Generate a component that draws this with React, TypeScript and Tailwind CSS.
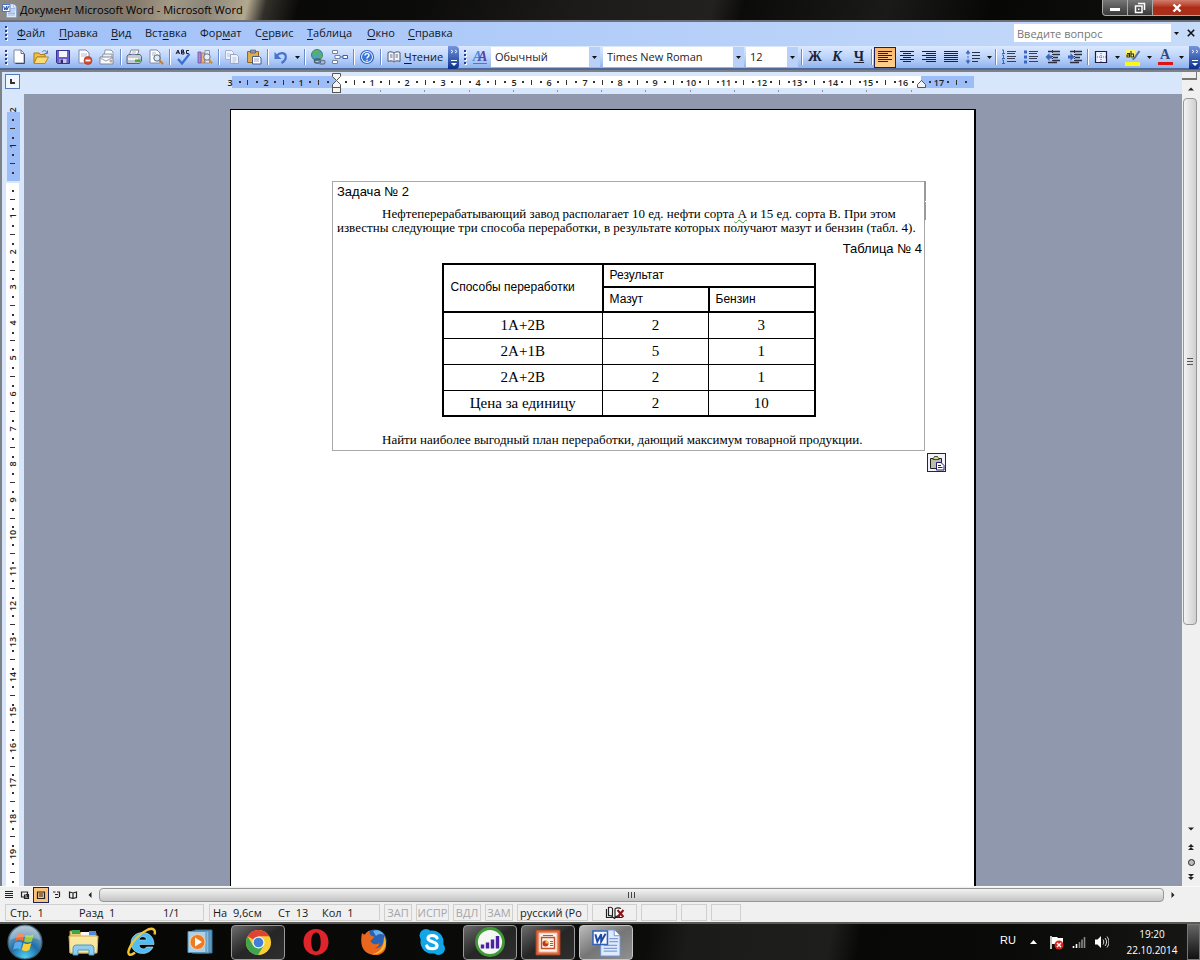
import React from 'react';

const UI = "font-['Open_Sans','Noto_Sans',sans-serif]";

/* ---------- small shared parts ---------- */

const Icon: React.FC<{ children: React.ReactNode; className?: string; box?: string }> = ({
  children,
  className = 'size-4',
  box = '0 0 16 16',
}) => (
  <svg viewBox={box} className={`${className} shrink-0`} fill="none" aria-hidden="true">
    {children}
  </svg>
);

const Sep = ({ narrow = false }: { narrow?: boolean }) => (
  <span className={`${narrow ? 'w-1' : 'w-[5px]'} flex h-4 shrink-0 justify-center`}>
    <span className="w-px bg-[#6a8ccb]" />
    <span className="w-px bg-white" />
  </span>
);

const Grip = () => (
  <svg viewBox="0 0 4 16" className="h-4 w-1 shrink-0" aria-hidden="true">
    {[1, 5, 9, 13].map((y) => (
      <g key={y}>
        <rect x="2" y={y + 1} width="2" height="2" fill="#fff" />
        <rect x="1" y={y} width="2" height="2" fill="#27418f" />
      </g>
    ))}
  </svg>
);

const Tool: React.FC<{ label: string; active?: boolean; children: React.ReactNode }> = ({ label, active, children }) => (
  <button
    type="button"
    aria-label={label}
    className={`flex h-[21px] w-[22px] shrink-0 items-center justify-center ${
      active ? 'border border-[#1c1f5e] bg-gradient-to-b from-[#fbb56b] to-[#fdd08f]' : ''
    }`}
  >
    {children}
  </button>
);

const Caret = ({ label }: { label: string }) => (
  <button type="button" aria-label={label} className="flex h-5 w-2.5 shrink-0 items-center justify-center">
    <Icon className="h-[3px] w-[5px]" box="0 0 5 3">
      <path d="M0 0h5L2.5 3z" fill="#111" />
    </Icon>
  </button>
);

const Overflow = () => (
  <button
    type="button"
    aria-label="Параметры панелей инструментов"
    className="flex h-[23px] w-[11px] shrink-0 items-end justify-center rounded-r-sm bg-gradient-to-b from-[#7596dc] to-[#0c2f8f] pb-0.5"
  >
    <Icon className="h-[18px] w-2" box="0 0 8 18">
      <path d="M1 1l2 1.500-2 1.500M5 1l2 1.500-2 1.500" stroke="#e8f0ff" />
      <path d="M1 11.500h6" stroke="#fff" />
      <path d="M1 14h6l-3 3z" fill="#fff" />
    </Icon>
  </button>
);

const Combo: React.FC<{ label: string; value: string; className: string }> = ({ label, value, className }) => (
  <span className={`relative flex h-5 shrink-0 ${className}`}>
    <select
      aria-label={label}
      defaultValue={value}
      className="h-5 w-full appearance-none border-r-[11px] border-[#b9d1f8] bg-white pl-1 text-[11px] leading-5 text-[#1b1b2b] outline-none"
    >
      <option>{value}</option>
    </select>
    <span className="pointer-events-none absolute top-[9px] right-[3px]">
      <Icon className="h-[3px] w-[5px]" box="0 0 5 3">
        <path d="M0 0h5L2.5 3z" fill="#111" />
      </Icon>
    </span>
  </span>
);

/* ---------- toolbar icons ---------- */

const Page = ({ x = 3, y = 1 }: { x?: number; y?: number }) => (
  <path d={`M${x} ${y}h7l3 3v10h-10z`} fill="#fff" stroke="#7d8aa8" />
);

const NewDoc = () => (
  <Icon>
    <Page />
    <path d="M10 1v3.500h3" stroke="#5c6b90" />
    <path d="M13.500 5v9.500h-9" stroke="#3e4a6d" />
  </Icon>
);
const OpenDoc = () => (
  <Icon>
    <path d="M1 4h5l1 1.500h5V8H4l-3 6z" fill="#f0c04a" stroke="#a97a16" />
    <path d="M4 8h11.500l-3.500 6.500H1z" fill="#fddc77" stroke="#b58822" />
    <path d="M9 3c2-2 4-2 5 1M14.500 1.500V4.500h-3" stroke="#4e79bf" />
  </Icon>
);
const SaveDoc = () => (
  <Icon>
    <path d="M1.500 1.500h13v13h-12l-1-1z" fill="#6b60cb" stroke="#37338c" />
    <path d="M4 2h8v6H4z" fill="#f3f3fb" />
    <path d="M4.500 10h7v4h-7z" fill="#c9c8e8" />
    <path d="M5.500 10.500h2.500v3.500H5.500z" fill="#2f2b72" />
  </Icon>
);
const Permission = () => (
  <Icon>
    <Page x={2} y={1} />
    <path d="M4 5h6M4 7h6" stroke="#b3bdd3" />
    <circle cx="11" cy="11.500" r="4" fill="#db4a2c" stroke="#a82c14" strokeWidth=".6" />
    <path d="M8.500 11.500h5" stroke="#fff" strokeWidth="1.800" />
  </Icon>
);
const Mail = () => (
  <Icon>
    <path d="M6 1h6l2 2v6H5z" fill="#fff" stroke="#8c95a8" />
    <path d="M4 5h9v6H3z" fill="#edf0f7" stroke="#8c95a8" />
    <path d="M1 8h12l1 2v5H1z" fill="#fafafa" stroke="#7f879a" />
    <path d="M1 9l6 3 6-3" stroke="#9aa2b5" />
    <circle cx="12" cy="12" r="1.500" fill="#c9a09a" />
  </Icon>
);
const Print = () => (
  <Icon>
    <path d="M5 1h8l-2 6H3z" fill="#fff" stroke="#7a8499" />
    <path d="M1 7l2-1.500h11l1.500 2V12l-2 2.500H1z" fill="#c5cbd6" stroke="#5a6478" />
    <path d="M2 9h10v2H2z" fill="#f2f4f8" />
    <path d="M9 13h5l1-2.500H9z" fill="#3fae35" />
    <path d="M6 3h4M5.500 5h4" stroke="#a7afc0" />
  </Icon>
);
const Preview = () => (
  <Icon>
    <Page x={2} />
    <path d="M4 4h4M4 6h3" stroke="#a9b3c8" />
    <circle cx="9" cy="9" r="3.200" fill="#dcebfa" stroke="#57637b" />
    <path d="M11.500 11.500l3.500 3.500" stroke="#c77d2b" strokeWidth="2" />
  </Icon>
);
const Spell = () => (
  <Icon className="h-[17px] w-[17px]" box="0 0 17 17">
    <path d="M1 5l2-4 1.500 4M1.800 3.800h2.500M6.500 1v4h2.500V3H6.500h2V1zM14 1.500h-2.500v3H14" stroke="#1b1b30" />
    <path d="M3 10l4 4.500L14.500 5" stroke="#3b6fd0" strokeWidth="2.200" />
  </Icon>
);
const Research = () => (
  <Icon>
    <path d="M1 3h3v11H1z" fill="#a58bd4" stroke="#6a52a0" strokeWidth=".8" />
    <path d="M4.500 4h3v10h-3z" fill="#f0b07a" stroke="#b07440" strokeWidth=".8" />
    <path d="M8 1.500h4.500V14H8z" fill="#e3e9f5" stroke="#7a849d" strokeWidth=".8" />
    <circle cx="10" cy="8" r="3.200" fill="#e6f0fb" stroke="#65708a" />
    <path d="M12 10.500l3 4" stroke="#cf8a30" strokeWidth="2" />
  </Icon>
);
const Copy = () => (
  <Icon>
    <path d="M1.500 1.500h6l2 2v7h-8z" fill="#eef3fc" stroke="#a6b2cc" />
    <path d="M6.500 5.500h6l2 2v7h-8z" fill="#eef3fc" stroke="#9aa7c4" />
    <path d="M3 5h3M3 7h3M8.500 9h4M8.500 11h4M8.500 13h3" stroke="#b5c1d9" />
  </Icon>
);
const Paste = () => (
  <Icon>
    <path d="M1.500 2.500h11v11h-11z" fill="#e0ab48" stroke="#94691f" />
    <path d="M4.500 1h5v3h-5z" fill="#8c94a6" stroke="#545c70" strokeWidth=".7" />
    <path d="M6.500 7.500h7l1.500 1.500v6h-8.500z" fill="#fff" stroke="#4e5a86" />
    <path d="M8 10h5M8 12h5" stroke="#9aa8ca" />
  </Icon>
);
const Undo = () => (
  <Icon>
    <path d="M4 6.500c3-3.500 8.500-3 8.800 1C13 10.500 11 12.500 8.500 14" stroke="#4673cd" strokeWidth="2.200" />
    <path d="M1.500 3v7H8.500z" fill="#4673cd" />
  </Icon>
);
const Hyperlink = () => (
  <Icon>
    <circle cx="7" cy="6" r="5.500" fill="#4a9edb" stroke="#2d6a4a" strokeWidth=".8" />
    <path d="M3 2.500c2-1.500 5-2 6.500-.5L8 5 4.500 6.500 5 9 2.500 7zM9 5l3.500-.5-1 5H8z" fill="#55b35d" />
    <rect x="4.500" y="10" width="6" height="4" rx="2" stroke="#4c5a74" strokeWidth="1.400" />
    <rect x="9" y="11.500" width="6" height="3.500" rx="1.700" stroke="#6e7c97" strokeWidth="1.400" />
  </Icon>
);
const Structure = () => (
  <Icon>
    <path d="M.5 1.500h5v3h-5zM.5 11.500h5v3h-5z" fill="#fff" stroke="#77839d" />
    <path d="M3 6.500h5v3H3z" fill="#fff" stroke="#77839d" />
    <path d="M8 8h3" stroke="#4c68a8" />
    <path d="M11 6.500h4.500v3H11z" fill="#fff" stroke="#3d5ea8" />
  </Icon>
);
const Help = () => (
  <Icon>
    <circle cx="8" cy="8" r="6.500" fill="#fff" stroke="#2f63c4" strokeWidth="1.200" />
    <circle cx="8" cy="8" r="5" fill="#3a75d8" />
    <path d="M6 6.500C6 4 10 4 10 6.300 10 8 8 7.800 8 9.500M8 10.800v1.400" stroke="#fff" strokeWidth="1.400" />
  </Icon>
);
const Book = () => (
  <Icon>
    <path d="M2 3.500c2-1 4-1 6 .5 2-1.500 4-1.500 6-.5v9c-2-1-4-1-6 .5-2-1.500-4-1.500-6-.5z" fill="#f3f5fa" stroke="#4c5670" />
    <path d="M8 4v9M4 6h2.500M4 8h2.500M9.500 6H12M9.500 8H12" stroke="#69738c" />
  </Icon>
);
const Styles = () => (
  <span className="flex border-b border-[#7a62c4] font-['Liberation_Serif',serif] text-sm leading-[13px] font-bold italic">
    <span className="-mr-1 text-[#4a8cd8]">A</span>
    <span className="text-[#5b3fa6]">A</span>
  </span>
);

const bars = {
  left: [14, 10, 14, 10, 14, 10],
  center: [14, 8, 14, 8, 14, 8],
  right: [14, 10, 14, 10, 14, 10],
  justify: [14, 14, 14, 14, 14, 14],
};
const Align = ({ kind }: { kind: keyof typeof bars }) => (
  <Icon>
    {bars[kind].map((w, i) => {
      const x = kind === 'center' ? 8 - w / 2 : kind === 'right' ? 15 - w : 1;
      return <rect key={i} x={x} y={2 + i * 2} width={w} height="1" fill="#1d1f33" />;
    })}
  </Icon>
);
const Spacing = () => (
  <Icon>
    <path d="M3 1L.5 4.500h5zM3 15L.5 11.500h5z" fill="#3b66c0" />
    <path d="M3 4v8" stroke="#3b66c0" strokeDasharray="2 1" />
    <path d="M7 3.500h8M7 6.500h8M7 9.500h8M7 12.500h6" stroke="#2b2e45" />
  </Icon>
);
const ListIcon = ({ numbers }: { numbers?: boolean }) => (
  <Icon>
    {[3, 8, 13].map((y) =>
      numbers ? (
        <path key={y} d={`M1 ${y - 2}h1.500v3.500M1 ${y + 1.500}h3`} stroke="#3b66c0" />
      ) : (
        <rect key={y} x="1" y={y - 1.500} width="3" height="3" fill="#3b66c0" />
      )
    )}
    <path d="M6 2.500h9M6 4.500h8M6 7.500h9M6 9.500h8M6 12.500h9" stroke="#3a3f56" />
  </Icon>
);
const Indent = ({ flip }: { flip?: boolean }) => (
  <Icon>
    <path d="M3 2.500h12M8 5.500h7M8 8.500h5M8 11.500h7M3 13.500h9" stroke="#2b2e45" strokeWidth="1.300" />
    {flip ? <path d="M1 6.500h2.500V4l4 4-4 4V9.500H1z" fill="#3b66c0" /> : <path d="M7 6.500H4.500V4l-4 4 4 4V9.500H7z" fill="#3b66c0" />}
    <path d="M7.500 1v14" stroke="#2b2e45" strokeDasharray="1 1" />
  </Icon>
);
const Borders = () => (
  <Icon>
    <path d="M2.500 2.500h11v11h-11z" fill="#eaf2ff" stroke="#1d1f4a" strokeWidth="1.200" />
    <path d="M8 4v9M4 8h9" stroke="#5d6585" strokeDasharray="1 1" />
  </Icon>
);
const Highlight = () => (
  <Icon className="h-[17px] w-4" box="0 0 16 17">
    <rect x="1" y="1" width="9" height="8" fill="#fbf36a" />
    <path d="M2 4.500h2.500V8H2V6h2.500M6 2v6h2.500V5H6" stroke="#2a2a1c" strokeWidth="1.100" />
    <path d="M14.500 2L9.500 9l-2 1.500" stroke="#60708f" strokeWidth="2" />
    <rect x="0" y="13" width="15" height="4" fill="#fbf716" />
  </Icon>
);
const FontColor = () => (
  <span className="flex w-4 flex-col items-center">
    <span className="font-['Liberation_Serif',serif] text-sm leading-3 font-bold text-[#30487f]">A</span>
    <span className="mt-px h-[3px] w-[15px] bg-[#dd1414]" />
  </span>
);

const WordLogo = ({ className = 'size-4' }: { className?: string }) => (
  <Icon className={className} box="0 0 30 30">
    <path d="M9 2h14l6 6v21H9z" fill="#dfeafc" stroke="#6e93d3" />
    <path d="M23 2v6h6" fill="#fff" stroke="#6e93d3" />
    <path d="M18 11h9M18 14h9M12 18h14M12 21h14M12 24h14" stroke="#7f9fd8" strokeWidth="1.300" />
    <path d="M1 3h15v14H1z" fill="#f5f9ff" stroke="#3562b8" strokeWidth="1.600" />
    <path d="M3.500 6.500l2 7.500 4-7.500 0 7.500 4.500-8" stroke="#2049a4" strokeWidth="2" />
  </Icon>
);

/* ---------- title bar + menu ---------- */

const TitleBar = () => (
  <header className="flex h-5 shrink-0 items-center bg-[linear-gradient(105deg,#8d8984_0,#7d7974_80px,#85796a_130px,#a39a86_165px,#8b857b_200px,#b3a88f_240px,#33302b_258px,#090908_290px,#0b0b0a_400px,#1c1b1a_560px,#22211f_690px,#0b0b0a_720px,#1a1a18_860px,#070706_960px,#11110f_100%)]">
    <WordLogo className="ml-0.5 size-[15px]" />
    <h1 className="ml-[3px] text-[11px] leading-5 whitespace-nowrap text-black">Документ Microsoft Word - Microsoft Word</h1>
    <div className="ml-auto flex h-full w-[98px] items-start">
      <button type="button" aria-label="Свернуть" className="flex h-4 w-[26px] items-center justify-center rounded-bl border border-t-0 border-[#aaa] bg-gradient-to-b from-[#777] to-[#3a3a3a]">
        <span className="mt-1 h-[3px] w-2.5 bg-white" />
      </button>
      <button type="button" aria-label="Свернуть в окно" className="flex h-4 w-[25px] items-center justify-center border-r border-b border-[#aaa] bg-gradient-to-b from-[#777] to-[#3a3a3a]">
        <Icon className="size-3" box="0 0 12 12">
          <path d="M4 1.500h6.500V8M1.500 4h6.500v6.500H1.500z" stroke="#fff" strokeWidth="1.500" />
          <path d="M4 6.500h1.500v1.500H4z" fill="#fff" />
        </Icon>
      </button>
      <button type="button" aria-label="Закрыть" className="flex h-4 flex-1 items-center justify-center border-b border-[#c99] bg-gradient-to-b from-[#cf7d6c] via-[#b02b15] to-[#a3311c]">
        <Icon className="size-2.5" box="0 0 10 10">
          <path d="M1.500 1.500l7 7M8.500 1.500l-7 7" stroke="#fff" strokeWidth="2.400" />
        </Icon>
      </button>
    </div>
  </header>
);

// [before, access key, after, width]
const menu: [string, string, string, string][] = [
  ['', 'Ф', 'айл', 'w-[42px]'],
  ['', 'П', 'равка', 'w-[52px]'],
  ['', 'В', 'ид', 'w-[34px]'],
  ['Вст', 'а', 'вка', 'w-[55px]'],
  ['Фор', 'м', 'ат', 'w-[55px]'],
  ['С', 'е', 'рвис', 'w-[52px]'],
  ['', 'Т', 'аблица', 'w-[60px]'],
  ['', 'О', 'кно', 'w-[41px]'],
  ['', 'С', 'правка', 'w-[52px]'],
];

const MenuBar = () => (
  <nav className="flex h-[26px] shrink-0 items-center border-t-2 border-[#6d7078] bg-gradient-to-r from-[#a0c0f8] to-[#c6dbf9] pb-0.5 pl-1">
    <Grip />
    <div className="ml-[9px] flex">
      {menu.map(([before, key, after, width]) => (
        <button key={before + key + after} type="button" className={`${width} text-left text-[11px] leading-5 whitespace-nowrap text-[#111827]`}>
          {before}
          <span className="underline underline-offset-2">{key}</span>
          {after}
        </button>
      ))}
    </div>
    <div className="ml-auto flex h-[18px] w-[167px] items-center bg-white">
      <input
        type="text"
        aria-label="Введите вопрос"
        placeholder="Введите вопрос"
        className="h-full min-w-0 flex-1 pl-[3px] text-[11px] outline-none placeholder:text-[#777]"
      />
      <span className="flex h-full items-center bg-[#c6dbf9]">
        <Caret label="Список вопросов" />
      </span>
    </div>
    <button type="button" aria-label="Закрыть документ" className="flex w-[19px] justify-center">
      <Icon className="size-2" box="0 0 8 8">
        <path d="M.8 .8l6.400 6.400M7.200 .8L.8 7.200" stroke="#111" strokeWidth="1.600" />
      </Icon>
    </button>
  </nav>
);

const letter = "font-['Liberation_Serif',serif] text-sm leading-4 text-[#1d1f33]";

const Toolbars = () => (
  <div className="flex h-6 shrink-0 items-center border-b-2 border-[#50699c] bg-gradient-to-b from-[#dbe9ff] via-[#bdd4fa] to-[#8fb3ef] pl-1">
    <Grip />
    <Tool label="Создать"><NewDoc /></Tool>
    <Tool label="Открыть"><OpenDoc /></Tool>
    <Tool label="Сохранить"><SaveDoc /></Tool>
    <Tool label="Разрешения"><Permission /></Tool>
    <Tool label="Сообщение"><Mail /></Tool>
    <Sep />
    <Tool label="Печать"><Print /></Tool>
    <Tool label="Просмотр"><Preview /></Tool>
    <Sep />
    <Tool label="Правописание"><Spell /></Tool>
    <Tool label="Справочные материалы"><Research /></Tool>
    <Sep />
    <Tool label="Копировать"><Copy /></Tool>
    <Tool label="Вставить"><Paste /></Tool>
    <Sep />
    <Tool label="Отменить"><Undo /></Tool>
    <Caret label="Список отмены" />
    <Sep />
    <Tool label="Гиперссылка"><Hyperlink /></Tool>
    <Tool label="Схема документа"><Structure /></Tool>
    <Sep />
    <Tool label="Справка"><Help /></Tool>
    <Sep />
    <button type="button" className="flex h-5 w-[65px] shrink-0 items-center gap-0.5 pl-[3px] text-[11px] text-[#111827]">
      <Book />
      <span><span className="underline underline-offset-2">Ч</span>тение</span>
    </button>
    <Overflow />
    <span className="ml-1 flex"><Grip /></span>
    <span className="ml-0.5 flex"><Tool label="Стили и форматирование"><Styles /></Tool></span>
    <Combo label="Стиль" value="Обычный" className="w-[109px]" />
    <Combo label="Шрифт" value="Times New Roman" className="ml-[3px] w-[141px]" />
    <Combo label="Размер шрифта" value="12" className="mr-0.5 ml-0.5 w-[52px]" />
    <Sep narrow />
    <Tool label="Полужирный"><b className={letter}>Ж</b></Tool>
    <Tool label="Курсив"><b className={`${letter} italic`}>К</b></Tool>
    <Tool label="Подчеркнутый"><b className={`${letter} underline`}>Ч</b></Tool>
    <Sep narrow />
    <Tool label="По левому краю" active><Align kind="left" /></Tool>
    <Tool label="По центру"><Align kind="center" /></Tool>
    <Tool label="По правому краю"><Align kind="right" /></Tool>
    <Tool label="По ширине"><Align kind="justify" /></Tool>
    <Tool label="Междустрочный интервал"><Spacing /></Tool>
    <Caret label="Список интервалов" />
    <Sep narrow />
    <Tool label="Нумерация"><ListIcon numbers /></Tool>
    <Tool label="Маркеры"><ListIcon /></Tool>
    <Tool label="Уменьшить отступ"><Indent /></Tool>
    <Tool label="Увеличить отступ"><Indent flip /></Tool>
    <Sep narrow />
    <Tool label="Границы"><Borders /></Tool>
    <Caret label="Список границ" />
    <Tool label="Выделение цветом"><Highlight /></Tool>
    <Caret label="Список цветов выделения" />
    <Tool label="Цвет шрифта"><FontColor /></Tool>
    <Caret label="Список цветов шрифта" />
    <span className="ml-auto flex"><Overflow /></span>
  </div>
);

/* ---------- rulers ---------- */

const CM = 35.43;
const range = (from: number, to: number) => Array.from({ length: to - from + 1 }, (_, i) => from + i);

// quarter steps between two centimetre labels: dot, bar, dot
const marks = (from: number, to: number, min: number, max: number) =>
  range(from * 4, to * 4)
    .filter((q) => q % 4 !== 0)
    .map((q) => ({ pos: (q * CM) / 4, half: q % 2 === 0 }))
    .filter((m) => m.pos > min && m.pos < max);

const rulerText = "font-['Open_Sans','Noto_Sans',sans-serif] text-[9px] font-semibold";

const HorizontalRuler = () => (
  <svg width="744" height="22" className="shrink-0 overflow-visible" aria-hidden="true">
    <rect x="1" y="4" width="742" height="12" fill="#9dbdf8" />
    <rect x="105" y="4" width="585" height="12" fill="#fff" />
    {marks(-3, 18, -104, 636).map(({ pos, half }) => (
      <rect key={pos} x={Math.round(105 + pos)} y={half ? 8 : 9} width={half ? 1 : 2} height={half ? 5 : 2} fill="#333" />
    ))}
    {range(-3, 17).filter((n) => n !== 0).map((n) => (
      <text key={n} x={Math.round(105.5 + n * CM)} y="14" textAnchor="middle" fill="#222" className={rulerText}>{Math.abs(n)}</text>
    ))}
    {range(1, 13).map((n) => (
      <rect key={n} x={Math.round(105 + n * 44.200)} y="18" width="1" height="2" fill="#8b93a5" />
    ))}
    <path d="M101.500 1.500h8v3l-4 4 4 4v3h-8v-3l4-4-4-4z" fill="#f4f4f4" stroke="#555" />
    <rect x="101.500" y="15.500" width="8" height="5" fill="#f4f4f4" stroke="#555" />
    <path d="M686.500 15.500v-3l4-4 4 4v3z" fill="#f4f4f4" stroke="#555" />
  </svg>
);

const VerticalRuler = () => (
  <svg width="14" height="792" className="ml-[6px] block" aria-hidden="true">
    <rect x="1" y="18" width="13" height="69" fill="#9dbdf8" />
    <rect x="0" y="89" width="13" height="703" fill="#fff" />
    {marks(-2, 20, -200, 700).map(({ pos, half }) => (
      <rect key={pos} x={half ? 4 : 6} y={Math.round(87 + pos)} width={half ? 5 : 2} height={half ? 1 : 2} fill="#333" />
    ))}
    {range(-2, 19).filter((n) => n !== 0).map((n) => {
      const y = Math.round(87 + n * CM);
      return (
        <text key={n} x="10" y={y} transform={`rotate(-90 10 ${y})`} textAnchor="middle" fill="#222" className={rulerText}>{Math.abs(n)}</text>
      );
    })}
  </svg>
);

/* ---------- document ---------- */

const results = [
  { way: '1A+2B', mazut: 2, benzin: 3 },
  { way: '2A+1B', mazut: 5, benzin: 1 },
  { way: '2A+2B', mazut: 2, benzin: 1 },
  { way: 'Цена за единицу', mazut: 2, benzin: 10 },
];

const DocumentPage = () => (
  <article className="mt-[15px] min-h-[1056px] w-[746px] shrink-0 border-t border-r-2 border-l border-black bg-white pt-[71px] pr-[49px] pl-[101px] text-black">
    <div className="relative border border-[#a8a8a8] pb-[3px] font-['Liberation_Serif',serif] text-[13px] leading-[14px]">
      <h2 className="mt-0.5 pl-1 font-['Liberation_Sans',sans-serif] leading-4">Задача № 2</h2>
      <p className="mt-[7px] pl-1 indent-[45px]">
        Нефтеперерабатывающий завод располагает 10 ед. нефти сорта
        <span className="underline decoration-[#3a9a3a] decoration-wavy decoration-1"> А</span> и 15 ед. сорта В. При этом
        <br />
        известны следующие три способа переработки, в результате которых получают мазут и бензин (табл. 4).
      </p>
      <p className="mt-1.5 pr-0.5 text-right font-['Liberation_Sans',sans-serif] leading-4">Таблица № 4</p>
      <table className="mx-auto mt-1.5 w-[374px] table-fixed border-collapse border-2 border-black">
        <colgroup>
          <col className="w-[160px]" />
          <col />
          <col />
        </colgroup>
        <thead className="font-['Liberation_Sans',sans-serif] text-xs">
          <tr className="h-[23px]">
            <th rowSpan={2} className="border-2 border-black pb-0.5 pl-[7px] text-left font-normal">Способы переработки</th>
            <th colSpan={2} className="border-2 border-black pb-0.5 pl-1.5 text-left font-normal">Результат</th>
          </tr>
          <tr className="h-[25px]">
            <th className="border-2 border-black pb-0.5 pl-1.5 text-left font-normal">Мазут</th>
            <th className="border-2 border-black pb-0.5 pl-1.5 text-left font-normal">Бензин</th>
          </tr>
        </thead>
        <tbody className="text-center text-[15px] leading-4">
          {results.map((row) => (
            <tr key={row.way} className="h-[26px]">
              <td className="border border-black">{row.way}</td>
              <td className="border border-black">{row.mazut}</td>
              <td className="border border-black">{row.benzin}</td>
            </tr>
          ))}
        </tbody>
      </table>
      <p className="mt-4 pl-1 indent-[45px]">Найти наиболее выгодный план переработки, дающий максимум товарной продукции.</p>
      <span className="absolute -top-px -right-0.5 h-5 w-0.5 bg-[#9a9a9a]" />
      <span className="absolute top-5 -right-0.5 h-[18px] w-0.5 bg-[#9a9a9a]" />
      <button type="button" aria-label="Параметры вставки" className="absolute top-full left-full mt-[3px] ml-[3px] flex size-[19px] items-center justify-center border border-[#1c1f6e] bg-[#f2f2fa]">
        <Icon>
          <path d="M1.500 3.500h11v10h-11z" fill="#b9bcae" stroke="#222" />
          <path d="M4 4.500c0-1.500 1-1.500 1.500-3h3c.5 1.500 1.500 1.500 1.500 3z" fill="#ded88e" stroke="#222" strokeWidth=".8" />
          <path d="M7.500 7.500h4.500l3 3v4.500h-7.500z" fill="#fff" stroke="#1c1f6e" />
          <path d="M9 10.500h3M9 12.500h4.500" stroke="#1c1f6e" />
        </Icon>
      </button>
    </div>
  </article>
);

const Tri = ({ d, label }: { d: string; label: string }) => (
  <button type="button" aria-label={label} className="flex size-[18px] shrink-0 items-center justify-center">
    <Icon className="size-1.5" box="0 0 6 6">
      <path d={d} fill="#222" />
    </Icon>
  </button>
);

const VerticalScroll = () => (
  <div className="flex w-[18px] shrink-0 flex-col bg-[#f0f0f0]">
    <div className="h-2 w-[15px] shrink-0 border-r border-b-2 border-[#777] bg-[#f0f0f0]" />
    <Tri label="Вверх" d="M0 4.500h6L3 1.500z" />
    <div className="min-h-0 flex-1">
      <div className="ml-px flex h-[73%] w-[14px] flex-col items-center justify-center gap-px rounded-sm border border-[#979797] bg-gradient-to-r from-[#f3f3f3] to-[#cfcfcf]">
        <span className="h-px w-1.5 bg-[#555]" />
        <span className="mt-px h-px w-1.5 bg-[#555]" />
        <span className="mt-px h-px w-1.5 bg-[#555]" />
      </div>
    </div>
    <Tri label="Вниз" d="M0 1.500h6L3 4.500z" />
    <Tri label="Предыдущая страница" d="M0 3h6L3 0zM0 6h6L3 3z" />
    <button type="button" aria-label="Выбор объекта перехода" className="flex h-3 w-[18px] shrink-0 items-center justify-center">
      <span className="size-[7px] rounded-full border border-[#222] bg-[#bbb]" />
    </button>
    <Tri label="Следующая страница" d="M0 0h6L3 3zM0 3h6L3 6z" />
  </div>
);

/* ---------- bottom rows ---------- */

const views: [string, string, boolean][] = [
  ['Обычный режим', 'M1 1.500h8M1 3.500h8M1 5.500h8M1 7.500h8', false],
  ['Веб-документ', 'M1.500 2h6v5h-6zM4.500 5h4v3.500h-4zM6 4.500h3', false],
  ['Разметка страницы', 'M1.500 2h7v6.500h-7zM3 4h4M3 6h4', true],
  ['Структура', 'M1 2h2.500M5 2h2.500v5M3 4.500h3M3 7.500h4', false],
  ['Режим чтения', 'M1.500 2L5 3l3.500-1v5.500L5 8.500 1.500 7.500zM5 3v5.500', false],
];

const HorizontalScroll = () => (
  <div className="flex h-[17px] shrink-0 items-center border-t border-[#fafafa] bg-[#f0f0f0] pl-px">
    {views.map(([label, d, active]) => (
      <button
        key={label}
        type="button"
        aria-label={label}
        className={`flex h-4 w-4 shrink-0 items-center justify-center ${active ? 'border border-[#1c1f5e] bg-[#fdc27a]' : ''}`}
      >
        <Icon className="size-2.5" box="0 0 10 10">
          <path d={d} stroke="#222" strokeWidth="1.200" />
        </Icon>
      </button>
    ))}
    <Tri label="Влево" d="M4.500 0v6L1.500 3z" />
    <div className="flex h-3.5 flex-1 items-center justify-center gap-0.5 rounded-sm border border-[#979797] bg-gradient-to-b from-[#f3f3f3] to-[#c4c4c4]">
      <span className="h-1.5 w-px bg-[#444]" />
      <span className="h-1.5 w-px bg-[#444]" />
      <span className="h-1.5 w-px bg-[#444]" />
    </div>
    <Tri label="Вправо" d="M1.500 0v6l3-3z" />
    <span className="w-[18px] shrink-0" />
  </div>
);

const cell = 'flex h-[17px] shrink-0 items-center border border-[#cfcfcf] whitespace-nowrap';

const StatusBar = () => (
  <footer className="flex h-[19px] shrink-0 items-center bg-[#f0f0f0] pl-[5px] text-[11px] leading-4 text-[#1a1a1a]">
    <div className={`${cell} w-[199px] pl-1`}>
      <span className="w-[69px]">Стр.&nbsp; 1</span>
      <span className="w-[84px]">Разд&nbsp; 1</span>
      <span>1/1</span>
    </div>
    <div className={`${cell} ml-[5px] w-[171px] pl-[3px]`}>
      <span className="w-[65px]">На&nbsp; 9,6см</span>
      <span className="w-11">Ст&nbsp; 13</span>
      <span>Кол&nbsp; 1</span>
    </div>
    <div className="ml-1 flex gap-1 text-[#a5a5a5]">
      <span className={`${cell} w-7 justify-center`}>ЗАП</span>
      <span className={`${cell} w-[33px] justify-center`}>ИСПР</span>
      <span className={`${cell} w-7 justify-center`}>ВДЛ</span>
      <span className={`${cell} w-7 justify-center`}>ЗАМ</span>
      <span className={`${cell} w-[71px] pl-0.5 text-[#1a1a1a]`}>русский (Ро</span>
      <span className={`${cell} w-[45px] justify-center`}>
        <Icon className="h-3.5 w-5" box="0 0 20 14">
          <path d="M1.500 3v8.500h7l1 1 1-1h7M3.500 1.500c2-.5 3.500 0 4 1v8c-1-.8-2-1-4-.8zM16 2.500c-2-1-5-1-6 .5v8c1-.8 3-1 5-.8" fill="#fff" stroke="#222" strokeWidth="1.200" />
          <path d="M12.500 4l6 7M18.500 4l-6 7" stroke="#8b1414" strokeWidth="2" />
        </Icon>
      </span>
      <span className={`${cell} w-9`} />
      <span className={`${cell} w-[26px]`} />
      <span className={`${cell} w-[30px]`} />
    </div>
  </footer>
);

/* ---------- taskbar ---------- */

const StartOrb = () => (
  <Icon className="size-9" box="0 0 36 36">
    <defs>
      <radialGradient id="orb" cx=".5" cy=".95" r=".95">
        <stop offset="0" stopColor="#4fd0f5" />
        <stop offset=".45" stopColor="#1f6ea8" />
        <stop offset="1" stopColor="#a9bcc9" />
      </radialGradient>
    </defs>
    <circle cx="18" cy="18" r="17" fill="url(#orb)" stroke="#3d5d70" strokeWidth="1.200" />
    <path d="M10 10.500c3-2 5-1.800 7.500-.5l-1.800 7c-2.500-1.300-4.500-1.300-7.500.3z" fill="#ee6a35" />
    <path d="M18.800 10.700c2.700 1.300 5 1.200 8-.5l-2 7.200c-2.800 1.500-5 1.500-7.800.2z" fill="#9ccb3f" />
    <path d="M7.900 18.800c2.800-1.500 5-1.500 7.400-.3l-1.900 7c-2.300-1.300-4.700-1.200-7.400.3z" fill="#5cabea" />
    <path d="M16.600 19.100c2.700 1.300 5 1.200 7.800-.3l-2 7.300c-2.700 1.500-5.200 1.300-7.700 0z" fill="#fbd033" />
    <path d="M3 16C4 7 10 2.500 18 2.500S32 7 33 16c-8-4-22-4-30 0z" fill="#fff" opacity=".25" />
  </Icon>
);
const Explorer = () => (
  <Icon className="h-7 w-8" box="0 0 32 28">
    <path d="M2 3h9l2 2h15v20H2z" fill="#eccb70" stroke="#b3923e" />
    <path d="M4 2h8v4H4z" fill="#43a34a" />
    <path d="M13 4h8v4h-8z" fill="#f6f6ff" />
    <path d="M21 3h7v4h-7z" fill="#4a8ddb" />
    <path d="M1 8h29l-1 17H2z" fill="#f9e7a0" stroke="#cfae58" />
    <path d="M5 27v-6c0-3 1-4 4-4h13c3 0 4 1 4 4v6h-5v-5H10v5z" fill="#8fcdf0" stroke="#4f96c7" />
  </Icon>
);
const Ie = () => (
  <Icon className="size-[30px]" box="0 0 30 30">
    <path d="M26 20c-1.800 4-5.500 6.500-10.500 6.500C9 26.500 4 22 4 16S9 5.500 15.500 5.500 27 10 27 17.500H12c.2 5 6 5.500 7.500 2.500zM12 13h7.500c-.3-4.500-7-4.500-7.500 0z" fill="#4fbdf4" stroke="#b8e4fb" strokeWidth=".6" fillRule="evenodd" />
    <path d="M8 25.500c-5 4-8 2.500-6-3C4.500 15 13 6 21 2.500c5-1.800 8 0 6.500 5" stroke="#f1c531" strokeWidth="2.400" />
  </Icon>
);
const MediaPlayer = () => (
  <Icon className="size-[26px]" box="0 0 26 26">
    <path d="M8 1h17v23H8z" fill="#5f9dc6" stroke="#396f96" />
    <path d="M5 2h17v22H5z" fill="#86bbdc" stroke="#4d84aa" />
    <path d="M1 2.500h18v21H1z" fill="#a9d2ea" stroke="#5d92b6" />
    <circle cx="10.500" cy="13" r="7.500" fill="#ee7a22" stroke="#fbd0a0" />
    <path d="M8 8.500v9l7-4.500z" fill="#fff" />
  </Icon>
);
const Chrome = () => (
  <Icon className="size-[27px]" box="0 0 28 28">
    <circle cx="14" cy="14" r="13" fill="#fbce31" />
    <path d="M14 14L2.700 7.500A13 13 0 0 1 25.300 7.500H14z" fill="#de4335" />
    <path d="M2.700 7.500A13 13 0 0 0 13.500 27l5.600-9.500L14 14 8.400 17.200z" fill="#3fa650" />
    <circle cx="14" cy="14" r="6.300" fill="#f5f5f5" />
    <circle cx="14" cy="14" r="5" fill="#3f80d8" />
  </Icon>
);
const Opera = () => (
  <Icon className="size-7" box="0 0 28 28">
    <path d="M14 1C6.500 1 1.500 6.500 1.500 14S6.500 27 14 27s12.500-5.500 12.500-13S21.500 1 14 1zm0 3.500c3.300 0 4.700 4 4.700 9.500s-1.400 9.500-4.700 9.500-4.700-4-4.700-9.500S10.700 4.500 14 4.500z" fill="#e0242c" fillRule="evenodd" />
  </Icon>
);
const Firefox = () => (
  <Icon className="size-7" box="0 0 28 28">
    <circle cx="15" cy="13" r="11.500" fill="#2a62b4" />
    <path d="M13 3c4-2 9 0 11 4-4-2-6-1-8 1z" fill="#6bb4ea" />
    <path d="M2 5c1 1 2 1.500 3 1.500 1-2 3-3.500 5-4-1 2-.5 4 1 5 2 .5 3 1 3 2s-3 2-3.500 3.500c1 3 5 4.500 9 2 0 3-3 5-5.500 5 6 1 10-3 9.500-10 3 4 4 9 .5 13.500S13 28 7.500 25 0 15 2 5z" fill="#e8671c" />
    <path d="M24 8c2.500 4 2.500 9 0 13s-8 6-12 5c7-1 13-7 12-18z" fill="#f8b62d" />
  </Icon>
);
const Skype = () => (
  <Icon className="size-[28px]" box="0 0 28 28">
    <circle cx="14" cy="14" r="11.500" fill="#12a5e8" />
    <circle cx="8" cy="7.500" r="6.500" fill="#12a5e8" />
    <circle cx="20.500" cy="20.500" r="6.500" fill="#12a5e8" />
    <path d="M19 10c-1-3-9-3.800-9 .3 0 4.200 9 2.700 9 7.200 0 4.300-9 4-10.200.4" stroke="#fff" strokeWidth="3.200" strokeLinecap="round" />
  </Icon>
);
const Meter = () => (
  <Icon className="size-[30px]" box="0 0 30 30">
    <circle cx="15" cy="15" r="13.500" fill="#f3f6f3" stroke="#3f9a36" strokeWidth="2.800" />
    <path d="M7.500 21.500v-4M12.500 21.500v-6M17.500 21.500v-9M22.500 21.500V9" stroke="#4b22a0" strokeWidth="3.400" />
  </Icon>
);
const PowerPoint = () => (
  <Icon className="h-[27px] w-[26px]" box="0 0 26 27">
    <path d="M1 1h24v25H1z" fill="#db6a45" stroke="#a33d1c" />
    <path d="M4 4h18v19H4z" fill="#fff3ea" stroke="#f3b79c" />
    <path d="M6.500 8.500h13v11h-13z" stroke="#c2512c" strokeWidth="1.400" />
    <circle cx="10.500" cy="14.500" r="3" fill="#b93b19" />
    <path d="M10.500 14.500v-3a3 3 0 0 1 3 3z" fill="#fbc04f" />
    <path d="M15 12.500h3M15 14.500h3M15 16.500h3M8 6.500h10" stroke="#c2512c" />
  </Icon>
);

type Open = 'none' | 'open' | 'current';
const apps: [string, React.ReactNode, Open][] = [
  ['Проводник', <Explorer />, 'none'],
  ['Internet Explorer', <Ie />, 'none'],
  ['Проигрыватель', <MediaPlayer />, 'none'],
  ['Chrome', <Chrome />, 'open'],
  ['Opera', <Opera />, 'none'],
  ['Firefox', <Firefox />, 'none'],
  ['Skype', <Skype />, 'none'],
  ['Модем', <Meter />, 'open'],
  ['PowerPoint', <PowerPoint />, 'open'],
  ['Word', <WordLogo className="size-[29px]" />, 'current'],
];

const frames: Record<Open, string> = {
  none: '',
  open: 'rounded-sm border border-[#999] bg-gradient-to-br from-[#6d6d6d] via-[#262626] to-[#2e2e2e]',
  current: 'rounded-sm border border-[#c4c4c4] bg-gradient-to-br from-[#bcbcbc] via-[#767676] to-[#909090]',
};

const Taskbar = () => (
  <div className="flex h-[38px] shrink-0 items-center border-t-2 border-[#5a5b57] bg-[linear-gradient(100deg,#050504_0,#0c0c0b_640px,#1b1b19_680px,#1e1e1c_820px,#080807_850px,#0a0a09_1000px,#171715_100%)] text-white">
    <button type="button" aria-label="Пуск" className="mr-[7px] flex w-[50px] shrink-0 justify-center">
      <StartOrb />
    </button>
    <div className="flex gap-1">
      {apps.map(([label, icon, state]) => (
        <button key={label} type="button" aria-label={label} className={`flex h-[35px] w-[54px] items-center justify-center ${frames[state]}`}>
          {icon}
        </button>
      ))}
    </div>
    <div className="ml-auto flex items-center">
      <span className="w-[30px] pb-1 font-['Liberation_Sans',sans-serif] text-[11px] leading-4">RU</span>
      <button type="button" aria-label="Скрытые значки" className="mr-3">
        <Icon className="h-1 w-[7px]" box="0 0 7 4">
          <path d="M0 4l3.500-4L7 4z" fill="#fff" />
        </Icon>
      </button>
      <Icon className="mr-2 size-[15px]" box="0 0 15 15">
        <path d="M2 1v13" stroke="#fff" strokeWidth="1.500" />
        <path d="M3 2h5l1 1h5v5l-5 1H3z" fill="#fff" />
        <circle cx="10" cy="10" r="4.500" fill="#d8251e" />
        <path d="M8 8l4 4M12 8l-4 4" stroke="#fff" strokeWidth="1.400" />
      </Icon>
      <Icon className="mr-2 size-3.5" box="0 0 14 14">
        <path d="M1.500 13v-2M4.500 13v-4" stroke="#fff" strokeWidth="1.600" />
        <path d="M7.500 13V7M10 13V4.500M12.500 13V2" stroke="#8a8a8a" strokeWidth="1.600" />
      </Icon>
      <Icon className="mr-4 h-3.5 w-[15px]" box="0 0 15 14">
        <path d="M1 4.500h2.500L7 1v12L3.500 9.500H1z" fill="#fff" />
        <path d="M9 4.500c1 1.500 1 3.500 0 5M11 3c2 2.500 2 5.500 0 8M13 1.500c2.500 3.500 2.500 7.500 0 11" stroke="#ddd" />
      </Icon>
      <div className="w-[54px] text-center text-[10px] leading-4">
        <div>19:20</div>
        <div className="whitespace-nowrap">22.10.2014</div>
      </div>
      <button type="button" aria-label="Свернуть все окна" className="ml-2 h-9 w-[13px] border border-[#777] bg-gradient-to-b from-[#666] to-[#111]" />
    </div>
  </div>
);

const App: React.FC = () => (
  <div className={`flex h-screen flex-col overflow-hidden bg-[#f0f0f0] ${UI}`}>
    <TitleBar />
    <MenuBar />
    <Toolbars />
    <main className="flex min-h-0 flex-1 border-t-2 border-l-2 border-[#7d8188] bg-[#d8e6fb]">
      <div className="flex w-[22px] shrink-0 flex-col overflow-hidden">
        <button type="button" aria-label="Выравнивание табуляции" className="mt-0.5 mb-[5px] ml-[3px] flex size-[15px] shrink-0 items-center justify-center border border-[#5579b8] bg-[#f2f6fd]">
          <span className="size-[5px] border-b-2 border-l-2 border-[#333]" />
        </button>
        <div className="-ml-0.5 min-h-0 flex-1">
          <VerticalRuler />
        </div>
      </div>
      <div className="flex min-w-0 flex-1 flex-col">
        <div className="flex h-[22px] shrink-0 justify-center">
          <HorizontalRuler />
        </div>
        <div className="flex min-h-0 flex-1 items-start justify-center overflow-hidden bg-[#9098ad]">
          <DocumentPage />
        </div>
      </div>
      <VerticalScroll />
    </main>
    <HorizontalScroll />
    <StatusBar />
    <Taskbar />
  </div>
);

export default App;
